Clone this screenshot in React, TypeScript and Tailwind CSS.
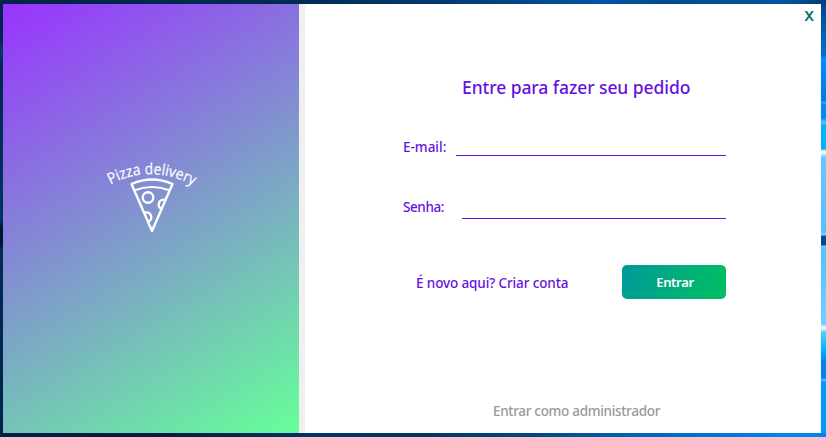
import type { ReactNode } from "react";

function PizzaLogo() {
  return (
    <svg width="116" height="90" viewBox="95 150 116 90" fill="none" stroke="#fff" strokeLinejoin="round">
      <defs>
        <path id="arc" d="M110.500 184.500 Q152 162 199 188.500" />
      </defs>
      <text fill="#fff" stroke="#fff" strokeWidth="0.200" fontSize="15.500" className="font-['Open_Sans',sans-serif]">
        <textPath href="#arc" textLength="86.500" lengthAdjust="spacingAndGlyphs">Pizza delivery</textPath>
      </text>
      <path strokeWidth="2.400" d="M131.500 184 Q152 175 172.500 184 L152 231 Z" />
      <path strokeWidth="2.200" d="M134 190.500 Q152 183.500 170 190.500" />
      <circle cx="148" cy="197.500" r="5.300" strokeWidth="2.400" />
      <path strokeWidth="2.400" d="M165.500 200.200 A4.700 4.700 0 1 0 161.500 209" />
      <path strokeWidth="2.400" d="M144.500 212.800 A4.600 4.600 0 1 1 148.500 221.500" />
    </svg>
  );
}

function Field({ label, id, labelClass, lineClass }: { label: ReactNode; id: string; labelClass: string; lineClass: string }) {
  return (
    <div className="flex w-[323px] items-start">
      <label htmlFor={id} className={`shrink-0 text-[13.5px] leading-[20px] ${labelClass}`}>{label}</label>
      <input id={id} className={`min-w-0 flex-1 border-b border-[#6610e0] bg-transparent outline-none ${lineClass}`} />
    </div>
  );
}

export default function App() {
  return (
    <div className="flex h-[437px] w-[826px] flex-col overflow-hidden font-['Noto_Sans',sans-serif] font-medium text-[#6610e0]">
      <div className="h-1 shrink-0 bg-[linear-gradient(90deg,#00234a_0%,#002b55_35%,#003e75_57%,#0054a4_73%,#004a8d_80%,#0054a0_95%,#003d76_100%)]" />
      <div className="flex h-[429px]">
        <div className="w-[3px] bg-[linear-gradient(180deg,#00234a_0px,#00264d_35px,#003c6d_47px,#00284f_65px,#003363_215px,#001630_224px,#001630_240px,#002c55_245px,#00234a_429px)]" />
        <aside className="flex w-[296px] justify-center bg-[linear-gradient(149deg,#9933ff,#66ff99)] pl-1 pt-[146px]">
          <PizzaLogo />
        </aside>
        <div className="w-1.5 bg-[#f0f0f0]" />
        <main className="flex w-[516px] flex-col bg-white pl-[98px]">
          <div className="flex h-[70px] justify-end pr-[7px]">
            <button className="h-[20px] text-[18px] leading-[20px] text-[#00726e]">x</button>
          </div>
          <h1 className="ml-[59px] h-[63px] whitespace-nowrap text-[17.5px] leading-[26px] tracking-[-0.07px]">Entre para fazer seu pedido</h1>
          <div className="h-[60px]">
            <Field id="email" label="E-mail:" labelClass="w-[53px]" lineClass="h-[19px]" />
          </div>
          <div className="h-[22px]">
            <Field id="senha" label="Senha:" labelClass="w-[59px] tracking-[-0.4px]" lineClass="h-[22px]" />
          </div>
          <div className="mt-[46px] flex h-[34px] w-[323px] items-center justify-between pl-[13px]">
            <a className="whitespace-nowrap pt-0.5 text-[13.5px] tracking-[-0.12px]">É novo aqui? Criar conta</a>
            <button className="h-[34px] w-[104px] rounded-[5px] bg-[linear-gradient(108deg,#009999,#00c060)] pl-[2px] pt-0.5 text-[13px] font-semibold tracking-[-0.3px] text-white">Entrar</button>
          </div>
          <a className="ml-[90px] mt-[102px] whitespace-nowrap text-[13.5px] leading-5 tracking-[-0.31px] text-[#999]">Entrar como administrador</a>
        </main>
        <div className="w-[5px] bg-[linear-gradient(180deg,#004488_0px,#0060b5_30px,#0070d0_52px,#008cff_54px,#0079e5_97px,#31adff_98px,#0089f0_101px,#0089f0_114px,#55c5ff_118px,#00b2fb_122px,#00b2fb_145px,#fff_147px,#d8f3ff_150px,#66c8ff_153px,#55bfff_228px,#93d9ff_231px,#004d8e_232px,#004d8e_241px,#7ac9ff_242px,#55bfff_246px,#6ed3ff_320px,#fff_324px,#55ccff_328px,#00b8ff_345px,#0084ec_358px,#0084ec_374px,#63c6ff_376px,#0099ff_378px,#0099ff_429px)]" />
      </div>
      <div className="h-1 shrink-0 bg-[linear-gradient(90deg,#00234a_0%,#001d40_20%,#00346b_38%,#003562_50%,#004985_65%,#0065bd_78%,#0084ee_95%)]" />
    </div>
  );
}
